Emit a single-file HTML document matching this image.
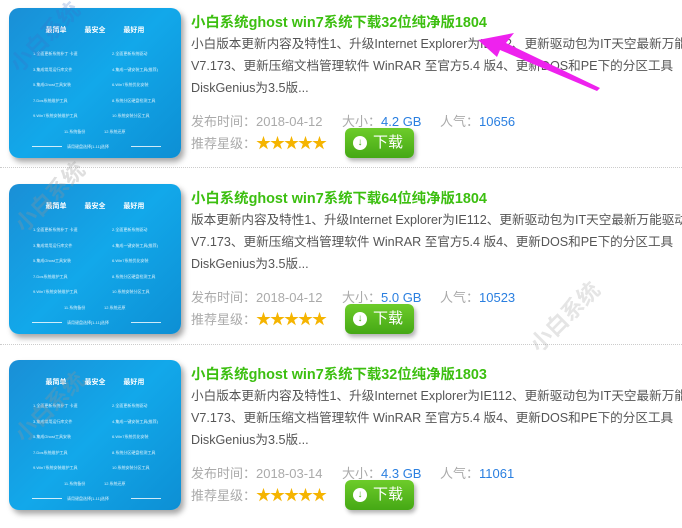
<!DOCTYPE html>
<html><head><meta charset="utf-8"><style>
body{margin:0;width:682px;height:512px;overflow:hidden;background:#fff;font-family:"Liberation Sans","Noto Sans CJK SC",sans-serif;position:relative}
.item{position:absolute;left:0;width:682px;height:176px}
.img{position:absolute;left:9px;top:8px;width:172px;height:150px;border-radius:10px;background:linear-gradient(135deg,#1a8fd6 0%,#12a8ea 50%,#0d8fd4 100%);box-shadow:3px 4px 6px rgba(0,0,0,.35);overflow:hidden;color:#fff}
.img .h{position:absolute;top:17px;left:0;width:100%;font-size:7px;font-weight:bold;text-align:center;word-spacing:16px}
.img .l{position:absolute;font-size:4px;opacity:.85;white-space:nowrap}
.img .ln{position:absolute;top:138px;height:1px;background:#fff;opacity:.8;width:30px}
.t{position:absolute;left:191px;top:11px;font-size:14.4px;font-weight:bold;color:#3cbf10;white-space:nowrap}
.d{position:absolute;left:191px;top:33px;width:491px;font-size:12.6px;line-height:22px;color:#555;white-space:nowrap;overflow:hidden}
.m{position:absolute;top:111px;font-size:13px;color:#aaa;white-space:nowrap}
.m b{font-weight:normal;color:#2a7fe0}
.s{position:absolute;left:191px;top:132px;font-size:13px;color:#aaa}
.s span{color:#f5b400;font-size:15px;letter-spacing:-1px}
.btn{position:absolute;left:345px;top:128px;width:69px;height:30px;border-radius:6px;background:linear-gradient(#6dcc2a,#45a815);box-shadow:2px 3px 4px rgba(0,0,0,.3);color:#fff;font-size:15px;line-height:30px}
.btn i{position:absolute;left:8px;top:8px;width:14px;height:14px;border-radius:50%;background:#fff;color:#4aae18;font-style:normal;font-size:10px;line-height:14px;text-align:center;font-weight:bold}
.btn em{position:absolute;left:28px;font-style:normal}
.sep{position:absolute;left:0;width:682px;border-top:1px dotted #ccc}
.wm{position:absolute;color:rgba(60,110,200,.25);font-size:22px;transform:rotate(-45deg);font-weight:bold}
</style></head><body>

<div class="item" style="top:0">
<div class="img"><div class="h">最简单 最安全 最好用</div>
<div class="l" style="left:24px;top:43px">1.全面更新系统补丁 卡速</div><div class="l" style="left:103px;top:43px">2.全面更新系统驱动</div>
<div class="l" style="left:24px;top:59px">3.集成常用运行库文件</div><div class="l" style="left:103px;top:59px">4.集成一键安装工具(推荐)</div>
<div class="l" style="left:24px;top:74px">5.集成Ghost工具安装</div><div class="l" style="left:103px;top:74px">6.Win7系统优化安装</div>
<div class="l" style="left:24px;top:90px">7.Dos系统维护工具</div><div class="l" style="left:103px;top:90px">8.系统分区硬盘检测工具</div>
<div class="l" style="left:24px;top:105px">9.Win7系统安装维护工具</div><div class="l" style="left:103px;top:105px">10.系统安装分区工具</div>
<div class="l" style="left:55px;top:121px">11.系统备份</div><div class="l" style="left:95px;top:121px">12.系统还原</div>
<div class="ln" style="left:23px"></div><div class="l" style="left:58px;top:136px">请用键盘选择[1-11]选择</div><div class="ln" style="left:122px"></div>
</div>
<div class="t">小白系统ghost win7系统下载32位纯净版1804</div>
<div class="d">小白版本更新内容及特性1、升级Internet Explorer为IE112、更新驱动包为IT天空最新万能驱动<br>V7.173、更新压缩文档管理软件 WinRAR 至官方5.4 版4、更新DOS和PE下的分区工具<br>DiskGenius为3.5版...</div>
<div class="m" style="left:191px">发布时间：2018-04-12</div>
<div class="m" style="left:342px">大小：<b>4.2 GB</b></div>
<div class="m" style="left:440px">人气：<b>10656</b></div>
<div class="s">推荐星级：<span>★★★★★</span></div>
<div class="btn"><i>↓</i><em>下载</em></div>
</div>
<div class="sep" style="top:167px"></div>

<div class="item" style="top:176px">
<div class="img"><div class="h">最简单 最安全 最好用</div>
<div class="l" style="left:24px;top:43px">1.全面更新系统补丁 卡速</div><div class="l" style="left:103px;top:43px">2.全面更新系统驱动</div>
<div class="l" style="left:24px;top:59px">3.集成常用运行库文件</div><div class="l" style="left:103px;top:59px">4.集成一键安装工具(推荐)</div>
<div class="l" style="left:24px;top:74px">5.集成Ghost工具安装</div><div class="l" style="left:103px;top:74px">6.Win7系统优化安装</div>
<div class="l" style="left:24px;top:90px">7.Dos系统维护工具</div><div class="l" style="left:103px;top:90px">8.系统分区硬盘检测工具</div>
<div class="l" style="left:24px;top:105px">9.Win7系统安装维护工具</div><div class="l" style="left:103px;top:105px">10.系统安装分区工具</div>
<div class="l" style="left:55px;top:121px">11.系统备份</div><div class="l" style="left:95px;top:121px">12.系统还原</div>
<div class="ln" style="left:23px"></div><div class="l" style="left:58px;top:136px">请用键盘选择[1-11]选择</div><div class="ln" style="left:122px"></div>
</div>
<div class="t">小白系统ghost win7系统下载64位纯净版1804</div>
<div class="d">版本更新内容及特性1、升级Internet Explorer为IE112、更新驱动包为IT天空最新万能驱动<br>V7.173、更新压缩文档管理软件 WinRAR 至官方5.4 版4、更新DOS和PE下的分区工具<br>DiskGenius为3.5版...</div>
<div class="m" style="left:191px">发布时间：2018-04-12</div>
<div class="m" style="left:342px">大小：<b>5.0 GB</b></div>
<div class="m" style="left:440px">人气：<b>10523</b></div>
<div class="s">推荐星级：<span>★★★★★</span></div>
<div class="btn"><i>↓</i><em>下载</em></div>
</div>
<div class="sep" style="top:344px"></div>

<div class="item" style="top:352px">
<div class="img"><div class="h">最简单 最安全 最好用</div>
<div class="l" style="left:24px;top:43px">1.全面更新系统补丁 卡速</div><div class="l" style="left:103px;top:43px">2.全面更新系统驱动</div>
<div class="l" style="left:24px;top:59px">3.集成常用运行库文件</div><div class="l" style="left:103px;top:59px">4.集成一键安装工具(推荐)</div>
<div class="l" style="left:24px;top:74px">5.集成Ghost工具安装</div><div class="l" style="left:103px;top:74px">6.Win7系统优化安装</div>
<div class="l" style="left:24px;top:90px">7.Dos系统维护工具</div><div class="l" style="left:103px;top:90px">8.系统分区硬盘检测工具</div>
<div class="l" style="left:24px;top:105px">9.Win7系统安装维护工具</div><div class="l" style="left:103px;top:105px">10.系统安装分区工具</div>
<div class="l" style="left:55px;top:121px">11.系统备份</div><div class="l" style="left:95px;top:121px">12.系统还原</div>
<div class="ln" style="left:23px"></div><div class="l" style="left:58px;top:136px">请用键盘选择[1-11]选择</div><div class="ln" style="left:122px"></div>
</div>
<div class="t">小白系统ghost win7系统下载32位纯净版1803</div>
<div class="d">小白版本更新内容及特性1、升级Internet Explorer为IE112、更新驱动包为IT天空最新万能驱动<br>V7.173、更新压缩文档管理软件 WinRAR 至官方5.4 版4、更新DOS和PE下的分区工具<br>DiskGenius为3.5版...</div>
<div class="m" style="left:191px">发布时间：2018-03-14</div>
<div class="m" style="left:342px">大小：<b>4.3 GB</b></div>
<div class="m" style="left:440px">人气：<b>11061</b></div>
<div class="s">推荐星级：<span>★★★★★</span></div>
<div class="btn"><i>↓</i><em>下载</em></div>
</div>

<div class="wm" style="left:0;top:20px">小白系统</div>
<div class="wm" style="left:5px;top:180px;color:rgba(150,150,150,.3)">小白系统</div>
<div class="wm" style="left:5px;top:390px;color:rgba(150,150,150,.3)">小白系统</div>
<div class="wm" style="left:520px;top:300px;color:rgba(150,150,150,.25)">小白系统</div>

<svg style="position:absolute;left:0;top:0" width="682" height="512">
<polygon points="478,40 514,33 506,43 600,88 597,91 500,50 497,57" fill="#ee22ee"/>
</svg>
</body></html>
